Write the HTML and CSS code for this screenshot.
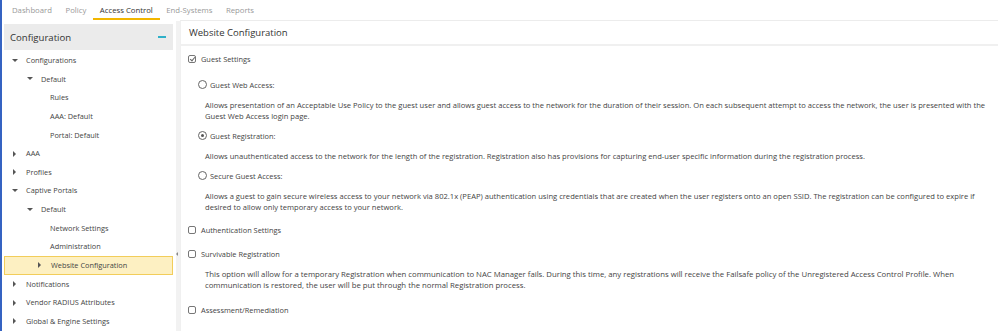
FILE: index.html
```html
<!DOCTYPE html>
<html>
<head>
    <link rel="stylesheet" href="styles.css">
</head>
<body>
    <div class="app">
        <div class="tab-bar">
            <span class="tab">Dashboard</span>
            <span class="tab">Policy</span>
            <span class="tab active">Access Control</span>
            <span class="tab">End-Systems</span>
            <span class="tab">Reports</span>
        </div>

        <div class="main">
            <div class="sidebar">
                <div class="sidebar-header">
                    <span>Configuration</span>
                    <span class="collapse-icon"></span>
                </div>
                <div class="tree">
                    <div class="tree-row lvl0"><span class="arrow down"></span>Configurations</div>
                    <div class="tree-row lvl1"><span class="arrow down"></span>Default</div>
                    <div class="tree-row lvl2">Rules</div>
                    <div class="tree-row lvl2">AAA: Default</div>
                    <div class="tree-row lvl2">Portal: Default</div>
                    <div class="tree-row lvl0"><span class="arrow right"></span>AAA</div>
                    <div class="tree-row lvl0"><span class="arrow right"></span>Profiles</div>
                    <div class="tree-row lvl0"><span class="arrow down"></span>Captive Portals</div>
                    <div class="tree-row lvl1"><span class="arrow down"></span>Default</div>
                    <div class="tree-row lvl2">Network Settings</div>
                    <div class="tree-row lvl2">Administration</div>
                    <div class="tree-row lvl2 selected"><span class="arrow right"></span>Website Configuration</div>
                    <div class="tree-row lvl0"><span class="arrow right"></span>Notifications</div>
                    <div class="tree-row lvl0"><span class="arrow right"></span>Vendor RADIUS Attributes</div>
                    <div class="tree-row lvl0"><span class="arrow right"></span>Global &amp; Engine Settings</div>
                </div>
            </div>

            <div class="splitter"><span class="splitter-arrow"></span></div>

            <div class="content">
                <div class="content-header">Website Configuration</div>
                <div class="content-body">
                    <label class="option"><span class="checkbox checked"></span>Guest Settings</label>

                    <div class="sub">
                        <label class="option"><span class="radio"></span>Guest Web Access:</label>
                        <p class="desc">Allows presentation of an Acceptable Use Policy to the guest user and allows guest access to the network for the duration of their session. On each subsequent attempt to access the network, the user is presented with the Guest Web Access login page.</p>

                        <label class="option"><span class="radio checked"></span>Guest Registration:</label>
                        <p class="desc">Allows unauthenticated access to the network for the length of the registration. Registration also has provisions for capturing end-user specific information during the registration process.</p>

                        <label class="option"><span class="radio"></span>Secure Guest Access:</label>
                        <p class="desc">Allows a guest to gain secure wireless access to your network via 802.1x (PEAP) authentication using credentials that are created when the user registers onto an open SSID. The registration can be configured to expire if desired to allow only temporary access to your network.</p>
                    </div>

                    <label class="option"><span class="checkbox"></span>Authentication Settings</label>
                    <label class="option"><span class="checkbox"></span>Survivable Registration</label>
                    <p class="desc wide">This option will allow for a temporary Registration when communication to NAC Manager fails. During this time, any registrations will receive the Failsafe policy of the Unregistered Access Control Profile. When communication is restored, the user will be put through the normal Registration process.</p>
                    <label class="option"><span class="checkbox"></span>Assessment/Remediation</label>
                </div>
            </div>
        </div>
    </div>
</body>
</html>
```

FILE: styles.css
```css
/* Page */
body {
    margin: 0;
    font-family: "Open Sans", "Liberation Sans", sans-serif;
    color: #444;
    background-color: white;
}

.app {
    border-left: 2px solid #3563c2;
    height: 331px;
    overflow: hidden;
}

/* Tab bar */
.tab-bar {
    display: flex;
    height: 20px;
    padding-left: 3.25px;
    font-size: 7.75px;
}

.tab {
    color: #999;
    padding: 5px 6.75px 0;
}

.tab.active {
    color: #333;
    border-bottom: 2px solid #f2b600;
}

/* Main area */
.main {
    display: flex;
    padding-left: 2px;
}

.sidebar {
    width: 169px;
    padding-top: 4px;
}

.sidebar-header {
    display: flex;
    justify-content: space-between;
    align-items: center;
    height: 26px;
    padding: 0 7px 0 6px;
    background-color: #ebebeb;
    font-size: 9.6px;
    color: #333;
}

.collapse-icon {
    width: 8px;
    height: 2px;
    background-color: #2fb0c8;
}

.tree {
    padding-top: 1px;
}

.tree-row {
    height: 18.65px;
    line-height: 18.65px;
    font-size: 7.35px;
    color: #444;
    display: flex;
    align-items: center;
    white-space: nowrap;
}

.tree-row.lvl0 { padding-left: 8px; }
.tree-row.lvl1 { padding-left: 23px; }
.tree-row.lvl2 { padding-left: 46px; }

.tree-row.selected {
    background-color: #fdf0c2;
    box-shadow: inset 0 0 0 1px #f2cd5a;
    padding-left: 33px;
}

.arrow {
    display: inline-block;
    width: 0;
    height: 0;
}

.arrow.down {
    border-left: 3px solid transparent;
    border-right: 3px solid transparent;
    border-top: 3px solid #555;
    margin-right: 8px;
}

.arrow.right {
    border-top: 3px solid transparent;
    border-bottom: 3px solid transparent;
    border-left: 3px solid #555;
    margin-left: 1px;
    margin-right: 10px;
}

/* Splitter */
.splitter {
    width: 4px;
    margin-left: 3px;
    margin-top: 1px;
    background-color: #f2f2f2;
    position: relative;
    height: 320px;
}

.splitter-arrow {
    position: absolute;
    top: 231px;
    left: 0;
    border-top: 2px solid transparent;
    border-bottom: 2px solid transparent;
    border-right: 2px solid #888;
}

/* Content panel */
.content {
    flex: 1;
    border-top: 1px solid #ececec;
    border-left: 1px solid #f0f0f0;
}

.content-header {
    height: 23px;
    line-height: 23px;
    padding-left: 8px;
    font-size: 9.5px;
    color: #333;
    border-bottom: 2px solid #f0f0f0;
}

.content-body {
    padding: 6px 8px 6px 7px;
    font-size: 7.4px;
    color: #444;
}

/* Options and descriptions: only top margins, so nothing collapses oddly */
.option {
    display: flex;
    align-items: center;
    height: 13px;
    margin: 0;
}

.sub {
    padding-left: 10px;
}

.sub .option {
    margin-top: 7px;
}

.sub .option:first-child {
    margin-top: 13px;
}

.sub + .option {
    margin-top: 10px;
}

.option + .option {
    margin-top: 11px;
}

.desc {
    margin: 9px 0 0;
    padding-left: 7px;
    line-height: 11px;
    font-size: 7.6px;
}

.desc.wide {
    padding-left: 17px;
    font-size: 7.75px;
}

.desc.wide + .option {
    margin-top: 12px;
}

.checkbox {
    box-sizing: border-box;
    width: 8px;
    height: 8px;
    border: 1px solid #777;
    border-radius: 2px;
    margin-right: 5px;
    position: relative;
}

.checkbox.checked::after {
    content: "";
    position: absolute;
    left: 2px;
    top: 0;
    width: 2px;
    height: 4px;
    border-right: 1px solid #666;
    border-bottom: 1px solid #666;
    transform: rotate(40deg);
}

.radio {
    box-sizing: border-box;
    width: 9px;
    height: 9px;
    border: 1px solid #666;
    border-radius: 50%;
    margin-right: 3px;
    position: relative;
}

.radio.checked::after {
    content: "";
    position: absolute;
    left: 2px;
    top: 2px;
    width: 3px;
    height: 3px;
    border-radius: 50%;
    background-color: #555;
}
```
